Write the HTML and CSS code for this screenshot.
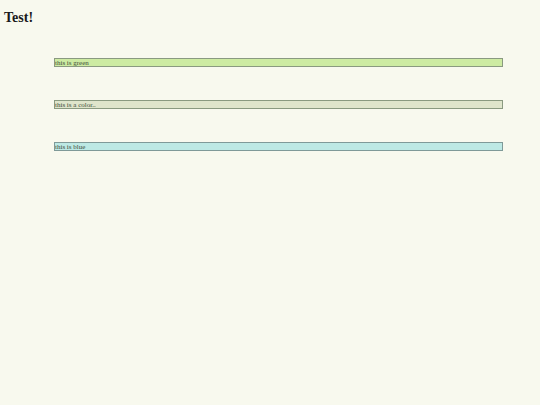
FILE: index.html
```html
<!DOCTYPE html>
<html lang="en">
<head>
    <meta charset="UTF-8">
    <title>Test</title>
    <link rel="stylesheet" href="styles.css">
</head>
<body>
    <h1>Test!</h1>
    <div class="bars">
        <div class="bar green">this is green</div>
        <div class="bar grey">this is a color..</div>
        <div class="bar blue">this is blue</div>
    </div>
</body>
</html>
```

FILE: styles.css
```css
* {
    margin: 0;
    padding: 0;
    box-sizing: border-box;
}

body {
    background: #f8f9ee;
    font-family: 'Liberation Serif', serif;
    padding: 10px 4px;
}

h1 {
    font-size: 14px;
    font-weight: bold;
    color: #1a1a1a;
    line-height: 15px;
}

.bars {
    display: flex;
    flex-direction: column;
    gap: 33px;
    margin: 33px 33px 0 50px;
}

.bar {
    height: 9px;
    border: 1px solid #8a9a80;
    font-size: 7px;
    line-height: 8px;
    color: #3e4c3a;
    overflow: hidden;
}

.green {
    background: #cdeba2;
}

.grey {
    background: #dfe5cb;
}

.blue {
    background: #bde9e4;
    border-color: #7f9a98;
}
```
